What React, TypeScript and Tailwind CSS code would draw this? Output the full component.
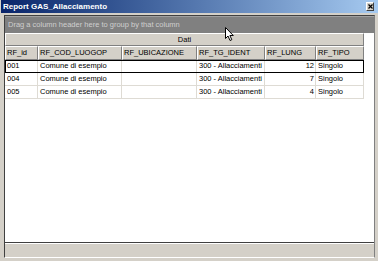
import React from "react";

const columns = [
  { name: "RF_id", w: "w-[33px]" },
  { name: "RF_COD_LUOGOP", w: "w-[84px]" },
  { name: "RF_UBICAZIONE", w: "w-[75px]" },
  { name: "RF_TG_IDENT", w: "w-[68px]" },
  { name: "RF_LUNG", w: "w-[51px]" },
  { name: "RF_TIPO", w: "w-[48px]" },
];

const rows = [
  ["001", "Comune di esempio", "", "300 - Allacciamenti", "12", "Singolo"],
  ["004", "Comune di esempio", "", "300 - Allacciamenti", "7", "Singolo"],
  ["005", "Comune di esempio", "", "300 - Allacciamenti", "4", "Singolo"],
];

export default function App() {
  return (
    <div className="w-[378px] h-[261px] overflow-hidden bg-[#d4d0c8] flex flex-col font-['Liberation_Sans',Arial,sans-serif] text-black relative">
      {/* Title bar */}
      <div className="h-[13px] ml-px flex items-center justify-between bg-gradient-to-r from-[#0a246a] to-[#a6caf0]">
        <span className="text-white font-bold text-[8px] leading-none pl-[2px] whitespace-nowrap">
          Report GAS_Allacciamento
        </span>
        <div className="w-[8px] h-[9px] mr-[4px] bg-[#d4d0c8] border-t border-l border-white border-r border-b border-r-[#404040] border-b-[#404040] flex items-center justify-center">
          <svg width="5" height="5" viewBox="0 0 5 5">
            <path d="M0.5 0.5 L4.5 4.5 M4.5 0.5 L0.5 4.5" stroke="#000" strokeWidth="1.2" />
          </svg>
        </div>
      </div>

      {/* Client */}
      <div className="mt-[2px] ml-[4px] mr-[3px] mb-[3px] flex-1 flex flex-col border-l border-t border-[#404040] border-r border-r-[#808080] border-b border-b-white">
        {/* Group by panel */}
        <div className="h-[17px] bg-[#808080] border-t border-[#a0a0a0] flex items-center pl-[3px]">
          <span className="text-[7.5px] text-[#cfcfcf] leading-none whitespace-nowrap">
            Drag a column header here to group by that column
          </span>
        </div>

        {/* Grid */}
        <div className="flex-1 bg-white">
          <div className="w-[359px] h-[13px] bg-[#d4d0c8] border-t border-l border-white border-r border-b border-r-[#808080] border-b-[#808080] flex items-center justify-center text-[7.5px] leading-none">
            Dati
          </div>
          <div className="flex h-[14px]">
            {columns.map((c) => (
              <div
                key={c.name}
                className={`${c.w} h-full bg-[#d4d0c8] border-t border-l border-white border-r border-b border-r-[#808080] border-b-[#808080] flex items-center pl-[1px] text-[7.5px] leading-none whitespace-nowrap overflow-hidden`}
              >
                {c.name}
              </div>
            ))}
          </div>
          {rows.map((r, i) => (
            <div
              key={r[0]}
              className={`flex h-[13px] w-[359px] ${i === 0 ? "outline outline-1 outline-black -outline-offset-1" : ""}`}
            >
              {r.map((v, j) => (
                <div
                  key={j}
                  className={`${columns[j].w} h-full border-r border-b border-[#dedbd4] flex items-center text-[7.5px] leading-none whitespace-nowrap overflow-hidden ${
                    j === 4 ? "justify-end pr-[1px]" : "pl-[2px]"
                  }`}
                >
                  {v}
                </div>
              ))}
            </div>
          ))}
        </div>

        {/* Status bar */}
        <div className="h-[15px] bg-[#d4d0c8] border-t border-[#404040]">
          <div className="h-full border-t border-white" />
        </div>
      </div>

      {/* Mouse pointer */}
      <svg className="absolute left-[225px] top-[27px]" width="10" height="16" viewBox="0 0 10 16">
        <path d="M0.5 0.5 L0.5 11.5 L3 9 L5 13.5 L6.8 12.7 L4.9 8.5 L8.3 8.5 Z" fill="#fff" stroke="#000" strokeWidth="1" />
      </svg>
    </div>
  );
}
